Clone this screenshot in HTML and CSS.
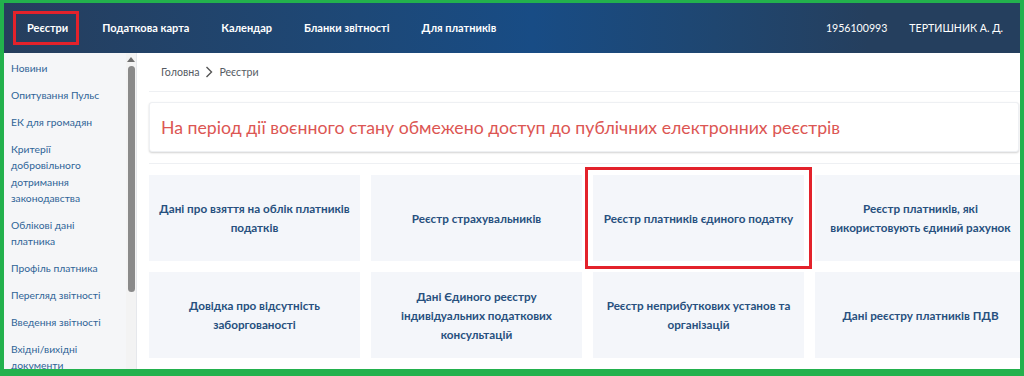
FILE: index.html
```html
<!DOCTYPE html>
<html lang="uk">
<head>
    <meta charset="UTF-8">
    <meta name="viewport" content="width=device-width, initial-scale=1.0">
    <title>Реєстри</title>
    <link rel="stylesheet" href="styles.css">
</head>
<body>
    <div class="frame">
        <!-- Header -->
        <header class="topbar">
            <nav class="topnav">
                <a class="topnav-item marked">Реєстри</a>
                <a class="topnav-item">Податкова карта</a>
                <a class="topnav-item">Календар</a>
                <a class="topnav-item">Бланки звітності</a>
                <a class="topnav-item">Для платників</a>
            </nav>
            <div class="user">
                <span>1956100993</span>
                <span>ТЕРТИШНИК А. Д.</span>
            </div>
        </header>

        <div class="layout">
            <!-- Sidebar -->
            <aside class="sidebar">
                <ul class="side-menu">
                    <li>Новини</li>
                    <li>Опитування Пульс</li>
                    <li>ЕК для громадян</li>
                    <li>Критерії добровільного дотримання законодавства</li>
                    <li>Облікові дані платника</li>
                    <li>Профіль платника</li>
                    <li>Перегляд звітності</li>
                    <li>Введення звітності</li>
                    <li>Вхідні/вихідні документи</li>
                </ul>
                <div class="scroll">
                    <div class="scroll-arrow"></div>
                    <div class="scroll-thumb"></div>
                </div>
            </aside>

            <!-- Main Content -->
            <main class="content">
                <div class="breadcrumbs">
                    <span>Головна</span>
                    <svg class="crumb-sep" width="8" height="12" viewBox="0 0 8 12"><path d="M1.5 1 L6.5 6 L1.5 11" fill="none" stroke="#555" stroke-width="1.4"/></svg>
                    <span>Реєстри</span>
                </div>

                <div class="notice">На період дії воєнного стану обмежено доступ до публічних електронних реєстрів</div>

                <div class="tiles">
                    <div class="tile">Дані про взяття на облік платників податків</div>
                    <div class="tile">Реєстр страхувальників</div>
                    <div class="tile marked">Реєстр платників єдиного податку</div>
                    <div class="tile">Реєстр платників, які використовують єдиний рахунок</div>
                    <div class="tile">Довідка про відсутність заборгованості</div>
                    <div class="tile">Дані Єдиного реєстру індивідуальних податкових консультацій</div>
                    <div class="tile">Реєстр неприбуткових установ та організацій</div>
                    <div class="tile">Дані реєстру платників ПДВ</div>
                </div>
            </main>
        </div>
    </div>
</body>
</html>
```

FILE: styles.css
```css
/* General */
body {
    margin: 0;
    font-family: Lato, "Open Sans", sans-serif;
    background: #ffffff;
}

.frame {
    height: 376px;
    box-sizing: border-box;
    border: solid #23b14d;
    border-width: 3px 4px 7px 4px;
    overflow: hidden;
    display: flex;
    flex-direction: column;
}

/* Header */
.topbar {
    height: 50px;
    flex-shrink: 0;
    display: flex;
    align-items: center;
    justify-content: space-between;
    padding: 0 17px 0 9px;
    background: linear-gradient(90deg, #263e5d 0%, #1d4877 35%, #184c85 52%, #1f4670 70%, #253f5e 85%);
    color: #ffffff;
}

.topnav {
    display: flex;
    align-items: center;
}

.topnav-item {
    font-size: 11px;
    font-weight: 700;
    padding: 7px 16px 8px;
}

.topnav-item.marked {
    border: 3px solid #e3222b;
    padding: 7px 8px 8px 11px;
    margin-right: 7px;
}

.user {
    display: flex;
    gap: 22px;
    font-size: 10.6px;
}

/* Layout */
.layout {
    flex: 1;
    display: flex;
    min-height: 0;
}

/* Sidebar */
.sidebar {
    width: 132px;
    flex-shrink: 0;
    display: flex;
    background: #f5f6f8;
    border-right: 1px solid #e6e8ec;
}

.side-menu {
    list-style: none;
    margin: 0;
    padding: 7px 0 0 7px;
    width: 100px;
}

.side-menu li {
    font-size: 10.3px;
    line-height: 16.4px;
    color: #2f6497;
    margin-bottom: 10.5px;
}

.scroll {
    width: 10px;
    margin-left: auto;
    background: #f3f3f3;
    display: flex;
    flex-direction: column;
    align-items: center;
}

.scroll-arrow {
    margin-top: 4px;
    width: 0;
    height: 0;
    border-left: 4px solid transparent;
    border-right: 4px solid transparent;
    border-bottom: 5px solid #6f6f6f;
}

.scroll-thumb {
    margin-top: 4px;
    width: 7px;
    height: 226px;
    border-radius: 4px;
    background: #8a8a8a;
}

/* Main */
.content {
    flex: 1;
    min-width: 0;
    padding: 0 0 0 12px;
}

.breadcrumbs {
    height: 38px;
    display: flex;
    align-items: center;
    gap: 6px;
    padding-left: 12px;
    font-size: 10.6px;
    color: #555b63;
    border-bottom: 1px solid #eef0f3;
}

.notice {
    margin-top: 10px;
    height: 50px;
    width: 870px;
    box-sizing: border-box;
    display: flex;
    align-items: center;
    padding-left: 11px;
    font-size: 17.7px;
    color: #dc5653;
    background: #ffffff;
    border: 1px solid #eef0f3;
    border-radius: 3px;
    box-shadow: 0 1px 2px rgba(0, 0, 0, 0.18);
}

.tiles {
    margin-top: 11px;
    padding-top: 11px;
    border-top: 1px solid #eef0f3;
    display: grid;
    grid-template-columns: repeat(4, 211px);
    grid-auto-rows: 86px;
    gap: 11px;
    width: 890px;
}

.tile {
    display: flex;
    align-items: center;
    justify-content: center;
    text-align: center;
    padding: 0 8px;
    font-size: 11.7px;
    font-weight: 700;
    line-height: 19px;
    color: #27507e;
    background: #f4f6fa;
}

.tile.marked {
    outline: 3px solid #e3222b;
    outline-offset: 5px;
}
```
